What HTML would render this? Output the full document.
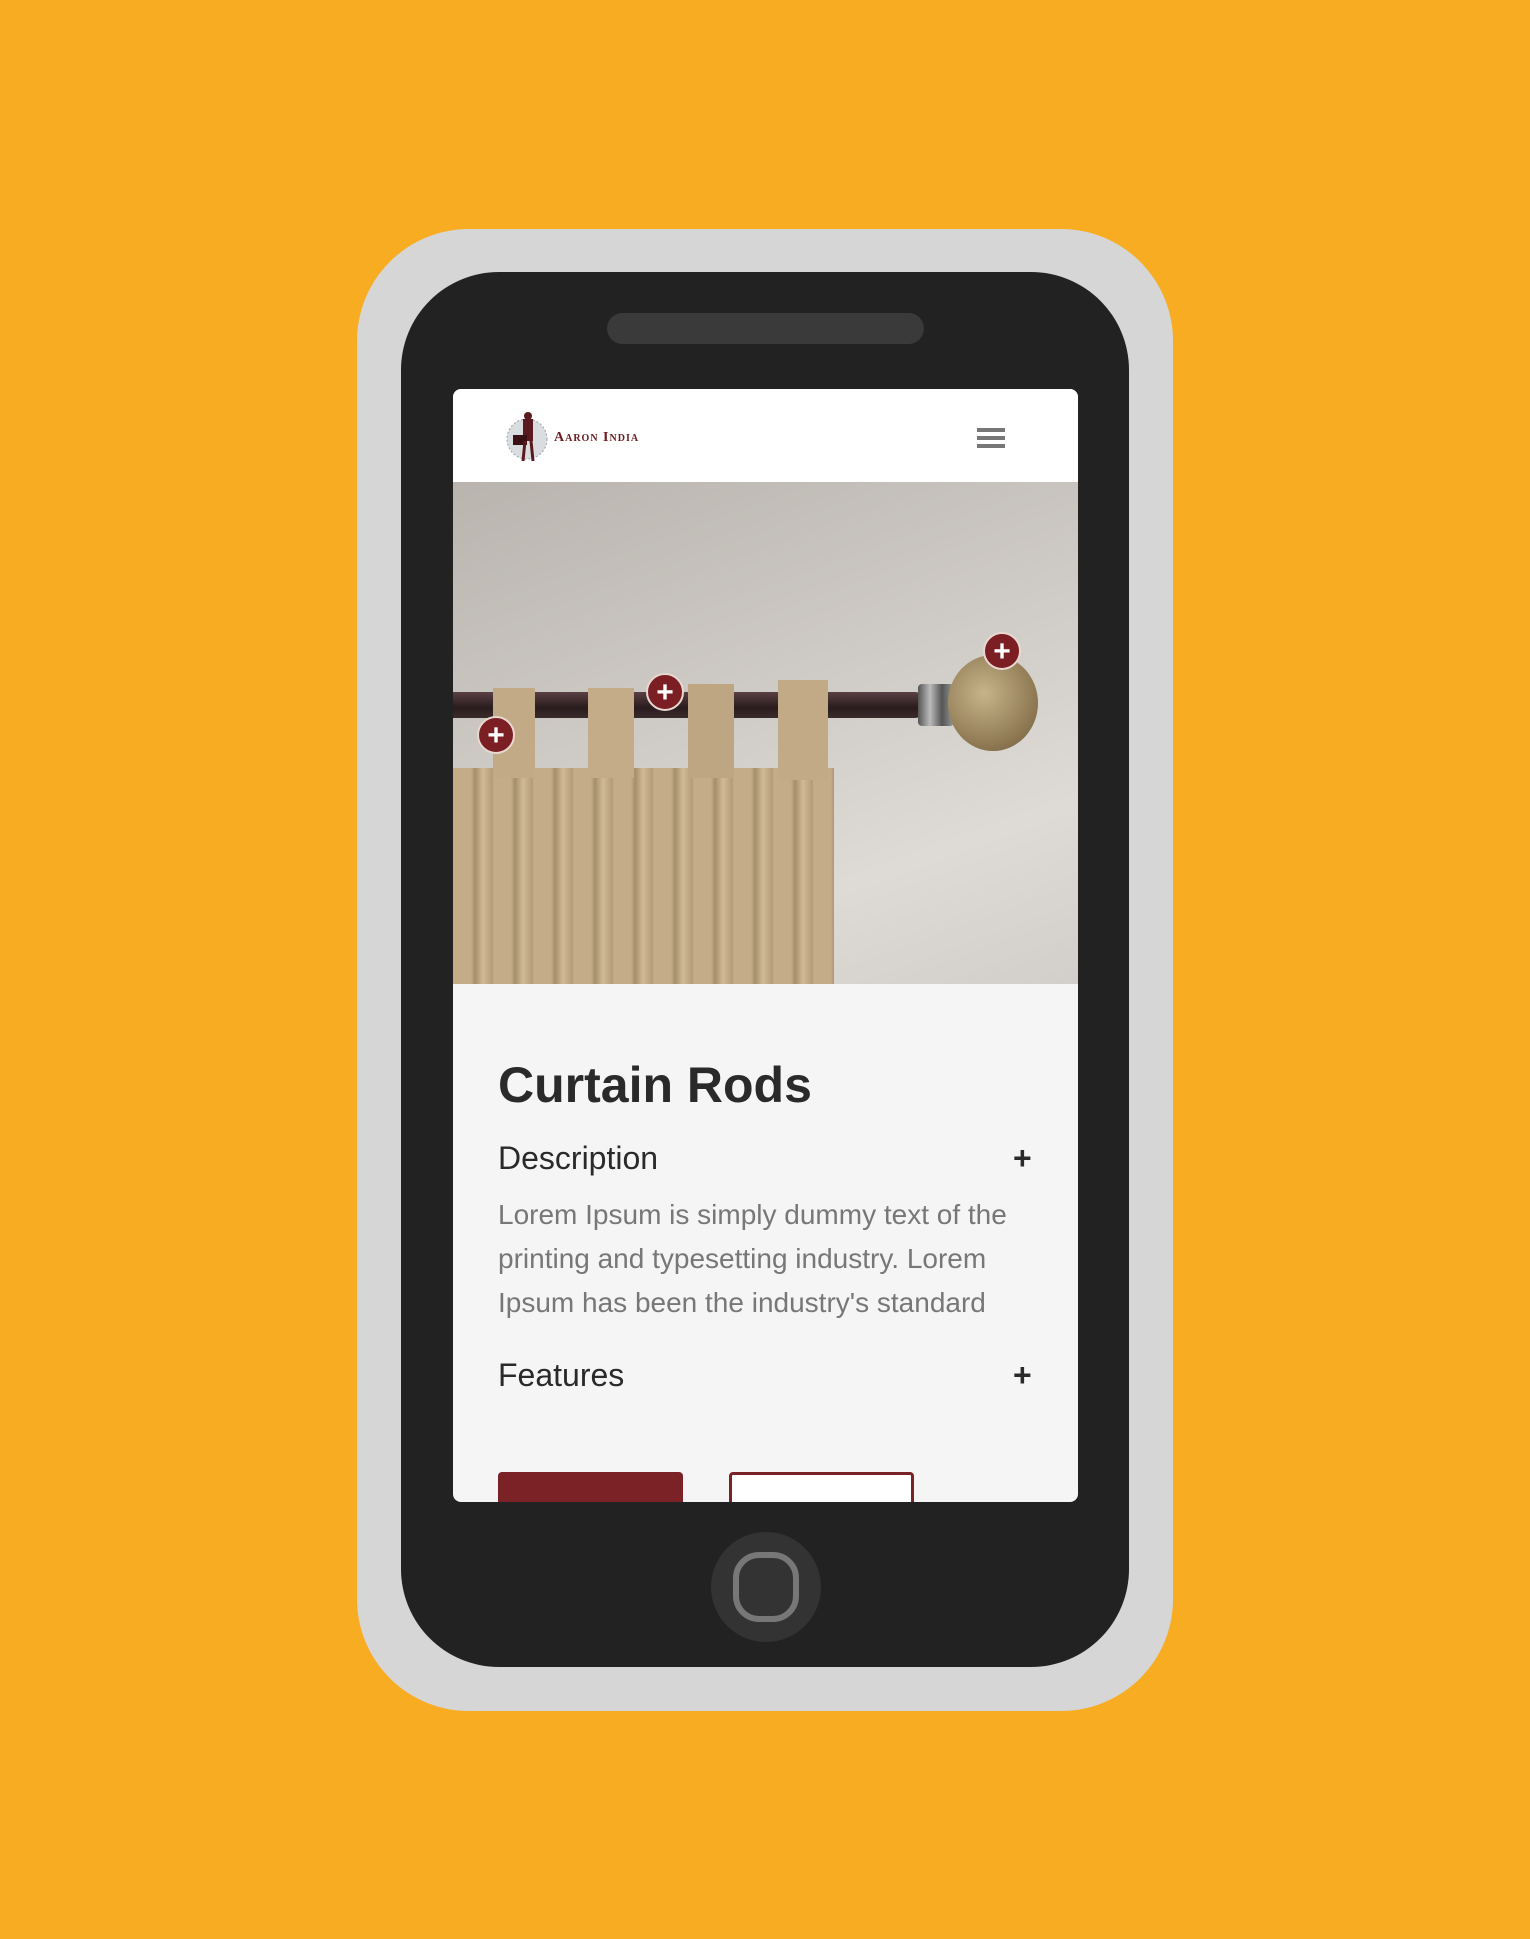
<!DOCTYPE html>
<html><head><meta charset="utf-8"><style>
*{margin:0;padding:0;box-sizing:border-box}
body{width:1530px;height:1939px;background:#f8ac22;position:relative;overflow:hidden;font-family:"Liberation Sans",sans-serif}
.abs{position:absolute}
.outer{left:357px;top:229px;width:816px;height:1482px;background:#d6d6d6;border-radius:112px}
.inner{left:401px;top:272px;width:728px;height:1395px;background:#222;border-radius:98px}
.spk{left:607px;top:313px;width:317px;height:31px;background:#3a3a3a;border-radius:16px}
.screen{left:453px;top:389px;width:625px;height:1113px;background:#f5f5f5;border-radius:8px;overflow:hidden}
.hdr{left:0;top:0;width:625px;height:93px;background:#fff}
.img{left:0;top:93px;width:625px;height:502px;background:linear-gradient(160deg,#b9b4ae 0%,#cfcbc6 45%,#dedbd6 75%,#d2cec9 100%);overflow:hidden}
.plus{width:38px;height:38px;border-radius:50%;background:#7b1f24;color:#fff;font-weight:bold;font-size:30px;line-height:36px;text-align:center;border:2px solid #e8d8d0}
.home{left:711px;top:1532px;width:110px;height:110px;border-radius:50%;background:#333}
.home i{position:absolute;left:22px;top:20px;width:66px;height:70px;border:6px solid #777;border-radius:26px}
h1{position:absolute;left:45px;top:667px;font-size:50px;font-weight:bold;color:#2a2a2a}
.h2{position:absolute;left:45px;font-size:32px;color:#2a2a2a}
.pl{position:absolute;left:560px;font-size:32px;font-weight:bold;color:#2a2a2a}
p{position:absolute;left:45px;top:804px;width:540px;font-size:28px;line-height:44px;color:#777}
</style></head><body>
<div class="abs outer"></div>
<div class="abs inner"></div>
<div class="abs spk"></div>
<div class="abs screen">
 <div class="abs hdr">
  <svg class="abs" style="left:52px;top:20px" width="46" height="56" viewBox="0 0 46 56"><circle cx="22" cy="30" r="20" fill="#d9dde0" stroke="#9aa3aa" stroke-dasharray="2 2"/><rect x="18" y="10" width="10" height="22" fill="#5a1a1f"/><circle cx="23" cy="7" r="4" fill="#5a1a1f"/><rect x="8" y="26" width="14" height="10" fill="#3a1215"/><path d="M20 32 L18 52 M26 32 L28 52" stroke="#5a1a1f" stroke-width="3"/></svg>
  <div class="abs" style="left:101px;top:41px;font-family:'Liberation Serif',serif;font-weight:bold;font-size:14px;color:#6b1a20;letter-spacing:1px;font-variant:small-caps">Aaron India</div>
  <div class="abs" style="left:524px;top:39px;width:28px;height:4px;background:#777"></div>
  <div class="abs" style="left:524px;top:47px;width:28px;height:4px;background:#777"></div>
  <div class="abs" style="left:524px;top:55px;width:28px;height:4px;background:#777"></div>
 </div>
 <div class="abs img">
  <div class="abs" style="left:0;top:210px;width:470px;height:26px;background:linear-gradient(#5a4044,#2a1c1e 60%,#3a2a2c);border-radius:0 8px 8px 0"></div>
  <div class="abs" style="left:465px;top:202px;width:36px;height:42px;background:linear-gradient(90deg,#555,#bbb,#555,#999);border-radius:4px"></div>
  <div class="abs" style="left:495px;top:173px;width:90px;height:96px;border-radius:50%;background:radial-gradient(circle at 40% 40%,#c8b48a,#8a7550 70%,#6a5a40)"></div>
  <div class="abs" style="left:0;top:286px;width:381px;height:216px;background:repeating-linear-gradient(90deg,#c4ac88 0 18px,#a68e6a 22px,#d0ba96 30px,#b29a76 40px)"></div>
  <div class="abs" style="left:40px;top:206px;width:42px;height:90px;background:#c2aa86"></div>
  <div class="abs" style="left:135px;top:206px;width:46px;height:90px;background:#c4ac88"></div>
  <div class="abs" style="left:235px;top:202px;width:46px;height:94px;background:#bea682"></div>
  <div class="abs" style="left:325px;top:198px;width:50px;height:100px;background:#c2aa86"></div>
  <div class="abs plus" style="left:24px;top:234px">+</div>
  <div class="abs plus" style="left:193px;top:191px">+</div>
  <div class="abs plus" style="left:530px;top:150px">+</div>
 </div>
 <h1>Curtain Rods</h1>
 <div class="h2" style="top:751px">Description</div><div class="pl" style="top:751px">+</div>
 <p>Lorem Ipsum is simply dummy text of the printing and typesetting industry. Lorem Ipsum has been the industry's standard</p>
 <div class="h2" style="top:968px">Features</div><div class="pl" style="top:968px">+</div>
 <div class="abs" style="left:45px;top:1083px;width:185px;height:60px;background:#7b2226;border-radius:4px"></div>
 <div class="abs" style="left:276px;top:1083px;width:185px;height:60px;border:3px solid #7b2226;border-radius:4px;background:#fff"></div>
</div>
<div class="abs home"><i></i></div>
</body></html>
